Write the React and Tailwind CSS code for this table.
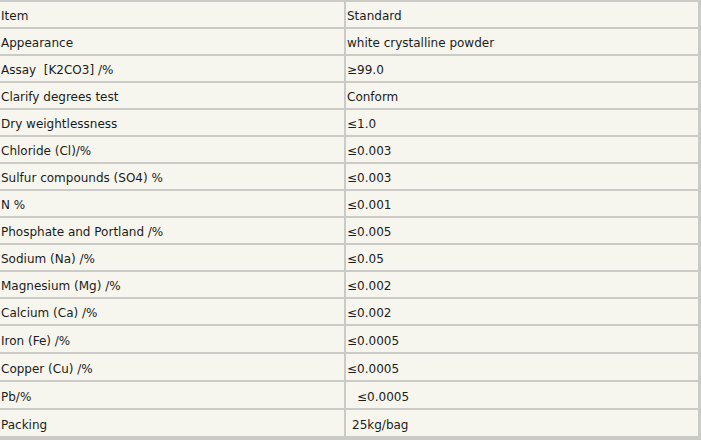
import React from "react";

const rows = [
  ["Item", "Standard"],
  ["Appearance", "white crystalline powder"],
  ["Assay\u00a0 [K2CO3] /%", "≥99.0"],
  ["Clarify degrees test", "Conform"],
  ["Dry weightlessness", "≤1.0"],
  ["Chloride (Cl)/%", "≤0.003"],
  ["Sulfur compounds (SO4) %", "≤0.003"],
  ["N %", "≤0.001"],
  ["Phosphate and Portland /%", "≤0.005"],
  ["Sodium (Na) /%", "≤0.05"],
  ["Magnesium (Mg) /%", "≤0.002"],
  ["Calcium (Ca) /%", "≤0.002"],
  ["Iron (Fe) /%", "≤0.0005"],
  ["Copper (Cu) /%", "≤0.0005"],
  ["Pb/%", "≤0.0005", "pl-[11px]"],
  ["Packing", "25kg/bag", "pl-[6px]"],
];

export default function App() {
  return (
    <div
      className="w-[701px] h-[440px] bg-[#cacac6] pt-[2px] pb-[2px] pr-[3px] flex flex-col gap-[2px] text-[12px] text-[#1c1c1c]"
      style={{ fontFamily: '"DejaVu Sans", Verdana, sans-serif' }}
    >
      {rows.map(([a, b, pad], i) => (
        <div key={i} className={`flex gap-[2px] ${i < 12 ? "h-[25px]" : "h-[26px]"}`}>
          <div className="w-[344px] bg-[#f6f6ee] flex items-center pl-[1px] pt-[3px] whitespace-nowrap">
            {a}
          </div>
          <div className={`flex-1 bg-[#f6f6ee] flex items-center pt-[3px] whitespace-nowrap ${pad || "pl-[1px]"}`}>
            {b}
          </div>
        </div>
      ))}
    </div>
  );
}
